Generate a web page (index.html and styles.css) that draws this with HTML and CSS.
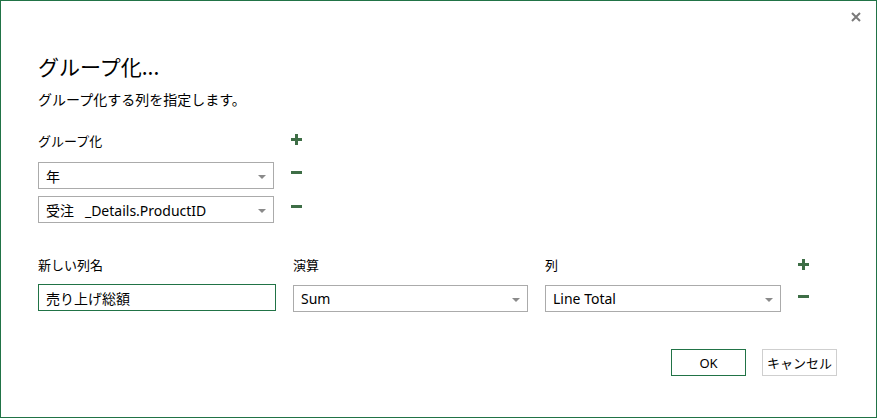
FILE: index.html
```html
<!DOCTYPE html>
<html lang="ja">
<head>
<meta charset="utf-8">
<link rel="stylesheet" href="styles.css">
</head>
<body>
<div class="dialog">
  <button class="close" aria-label="閉じる">
    <svg width="10" height="10" viewBox="0 0 10 10"><path d="M1 1L9 9M9 1L1 9" stroke="#7a7a7a" stroke-width="2"/></svg>
  </button>
  <h1 class="title">グループ化...</h1>
  <p class="subtitle">グループ化する列を指定します。</p>

  <div class="group-grid">
    <div class="label">グループ化</div>
    <div class="icon icon-plus"><svg width="11" height="11" viewBox="0 0 11 11"><path d="M5.5 0V11M0 5.5H11" stroke="#3e6e46" stroke-width="3"/></svg></div>

    <div class="select"><span>年</span><i class="arrow"></i></div>
    <div class="icon icon-minus"><svg width="11" height="3" viewBox="0 0 11 3"><path d="M0 1.5H11" stroke="#3e6e46" stroke-width="3"/></svg></div>

    <div class="select"><span>受注&nbsp;&nbsp;&nbsp;_Details.ProductID</span><i class="arrow"></i></div>
    <div class="icon icon-minus"><svg width="11" height="3" viewBox="0 0 11 3"><path d="M0 1.5H11" stroke="#3e6e46" stroke-width="3"/></svg></div>
  </div>

  <div class="agg-grid">
    <div class="label">新しい列名</div>
    <div class="label">演算</div>
    <div class="label">列</div>
    <div class="icon icon-plus"><svg width="11" height="11" viewBox="0 0 11 11"><path d="M5.5 0V11M0 5.5H11" stroke="#3e6e46" stroke-width="3"/></svg></div>

    <div class="textbox">売り上げ総額</div>
    <div class="select"><span>Sum</span><i class="arrow"></i></div>
    <div class="select"><span>Line Total</span><i class="arrow"></i></div>
    <div class="icon icon-minus"><svg width="11" height="3" viewBox="0 0 11 3"><path d="M0 1.5H11" stroke="#3e6e46" stroke-width="3"/></svg></div>
  </div>

  <div class="buttons">
    <button class="btn btn-ok">OK</button>
    <button class="btn btn-cancel">キャンセル</button>
  </div>
</div>
</body>
</html>
```

FILE: styles.css
```css
html, body {
  margin: 0;
  padding: 0;
  background: #fff;
}
body {
  font-family: "Segoe UI", "Noto Sans", "Noto Sans CJK JP", sans-serif;
  color: #000;
}
.dialog {
  position: relative;
  box-sizing: border-box;
  width: 877px;
  height: 418px;
  border: 1px solid #217346;
  padding: 0 0 0 37px;
  display: flex;
  flex-direction: column;
}
.close {
  position: absolute;
  top: 11px;
  right: 15px;
  width: 10px;
  height: 10px;
  padding: 0;
  border: 0;
  background: none;
  display: flex;
}
.title {
  margin: 49px 0 0 0;
  font-size: 21px;
  font-weight: normal;
  line-height: 32px;
  font-family: "Noto Sans CJK JP", sans-serif;
}
.subtitle {
  margin: 7px 0 0 0;
  font-size: 14px;
  line-height: 20px;
  font-family: "Noto Sans CJK JP", sans-serif;
}
.label {
  font-size: 13px;
  line-height: 18px;
  height: 18px;
  font-family: "Noto Sans CJK JP", sans-serif;
}
.group-grid {
  margin-top: 23px;
  display: grid;
  grid-template-columns: 236px 20px;
  column-gap: 17px;
  grid-template-rows: 23px 27px 27px;
  row-gap: 7px;
}
.icon {
  display: flex;
  align-items: center;
  justify-content: flex-start;
}
.icon-plus {
  height: 14px;
}
.icon-minus {
  padding-bottom: 6px;
}
.select, .textbox {
  box-sizing: border-box;
  height: 27px;
  border: 1px solid #ababab;
  display: flex;
  align-items: center;
  padding: 0 7px 0 7px;
  font-size: 14px;
  font-family: "Segoe UI", "Noto Sans", "Noto Sans CJK JP", sans-serif;
  background: #fff;
}
.select span {
  flex: 1;
  white-space: nowrap;
}
.arrow {
  width: 0;
  height: 0;
  border-left: 4px solid transparent;
  border-right: 4px solid transparent;
  border-top: 4px solid #8a8a8a;
  margin-top: 3px;
}
.textbox {
  border-color: #217346;
  font-family: "Noto Sans CJK JP", sans-serif;
}
.agg-grid {
  margin-top: 33px;
  display: grid;
  grid-template-columns: 238px 235px 236px 20px;
  column-gap: 17px;
  grid-template-rows: 18px 27px;
  row-gap: 10px;
}
.agg-grid .select {
  margin-top: 1px;
}
.agg-grid .icon-plus {
  height: 16px;
}
.agg-grid .icon-minus {
  padding-bottom: 2px;
}
.buttons {
  margin-top: 38px;
  display: flex;
  justify-content: flex-end;
  gap: 16px;
  padding-right: 39px;
}
.btn {
  box-sizing: border-box;
  width: 75px;
  height: 27px;
  background: #fff;
  font-size: 13px;
  font-family: "Segoe UI", "Noto Sans", "Noto Sans CJK JP", sans-serif;
  padding: 0;
  color: #000;
}
.btn-ok {
  border: 1px solid #217346;
}
.btn-cancel {
  border: 1px solid #cfcfcf;
}
```
